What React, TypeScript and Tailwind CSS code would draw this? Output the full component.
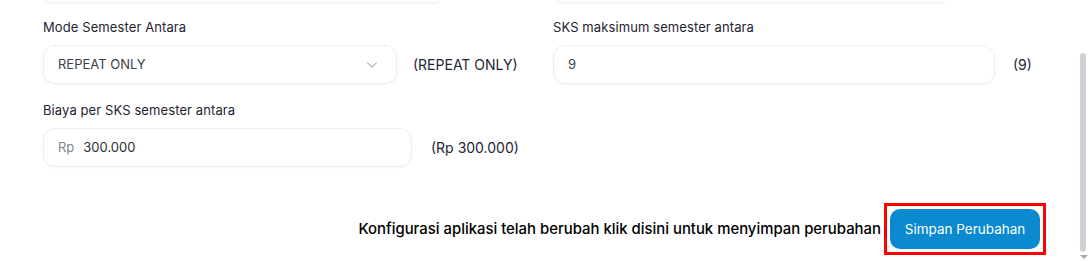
import React from "react";
import { ChevronDown } from "lucide-react";

const font = { fontFamily: "Inter, 'Noto Sans', sans-serif" };

const Field: React.FC<{ label: string; children: React.ReactNode; className?: string }> = ({
  label,
  children,
  className,
}) => (
  <div className={className}>
    <div className="text-[13px] leading-[18px] text-[#1f2430] tracking-[0.1px] mb-[9px]">{label}</div>
    {children}
  </div>
);

const boxClass =
  "h-[39px] bg-white border border-[#eceef1] rounded-xl shadow-[0_1px_2px_rgba(0,0,0,0.04)] flex items-center px-[14px] text-[13px]";

export default function App() {
  return (
    <div className="w-[1089px] h-[261px] bg-white flex overflow-hidden" style={font}>
      <div className="flex-1 flex flex-col">
        {/* bottoms of the inputs above, cut off by the viewport */}
        <div className="flex h-[3px]">
          <div className="ml-[44px] w-[396px] h-[3px] rounded-b-xl border-b border-x border-[#f0f1f3] shadow-[0_1px_2px_rgba(0,0,0,0.04)]" />
          <div className="ml-[117px] w-[388px] h-[3px] rounded-b-xl border-b border-x border-[#f0f1f3] shadow-[0_1px_2px_rgba(0,0,0,0.04)]" />
        </div>

        <div className="flex pl-[43px] pt-[15px]">
          <Field label="Mode Semester Antara" className="w-[510px]">
            <div className="flex items-center">
              <div className={`${boxClass} w-[354px] justify-between text-[#3a3f47]`}>
                <span>REPEAT ONLY</span>
                <ChevronDown className="w-[18px] h-[18px] text-[#9aa1ab] mr-[1px]" strokeWidth={1.4} />
              </div>
              <span className="ml-4 text-[14px] text-[#1e2535]">(REPEAT ONLY)</span>
            </div>
          </Field>
          <Field label="SKS maksimum semester antara">
            <div className="flex items-center">
              <div className={`${boxClass} w-[442px] text-[#3a3f47]`}>9</div>
              <span className="ml-[18px] text-[14px] text-[#1e2535]">(9)</span>
            </div>
          </Field>
        </div>

        <div className="flex pl-[43px] pt-[17px]">
          <Field label="Biaya per SKS semester antara">
            <div className="flex items-center">
              <div className={`${boxClass} w-[369px] text-[#2a2f38]`}>
                <span className="text-[#80868f] mr-[9px]">Rp</span>
                <span>300.000</span>
              </div>
              <span className="ml-[19px] text-[14px] text-[#1e2535]">(Rp 300.000)</span>
            </div>
          </Field>
        </div>

        <div className="flex items-center justify-end pr-[34px] mt-[36px]">
          <span className="whitespace-nowrap text-[14.9px] font-medium text-black mr-[3px]">
            Konfigurasi aplikasi telah berubah klik disini untuk menyimpan perubahan
          </span>
          <div className="border-[3px] border-[#ff0000] p-[3px]">
            <button className="w-[150px] h-[40px] rounded-[10px] bg-[#0b8acf] text-white text-[13.5px]">
              Simpan Perubahan
            </button>
          </div>
        </div>
      </div>

      {/* scrollbar */}
      <div className="w-[8px] flex flex-col items-start pt-[53px] mr-[1px]">
        <div className="w-[6px] h-[199px] rounded-sm bg-[#cdd1d8]" />
        <div className="mt-[3px] w-0 h-0 border-l-[4px] border-r-[4px] border-t-[4px] border-l-transparent border-r-transparent border-t-[#a3a9b3]" />
      </div>
    </div>
  );
}
